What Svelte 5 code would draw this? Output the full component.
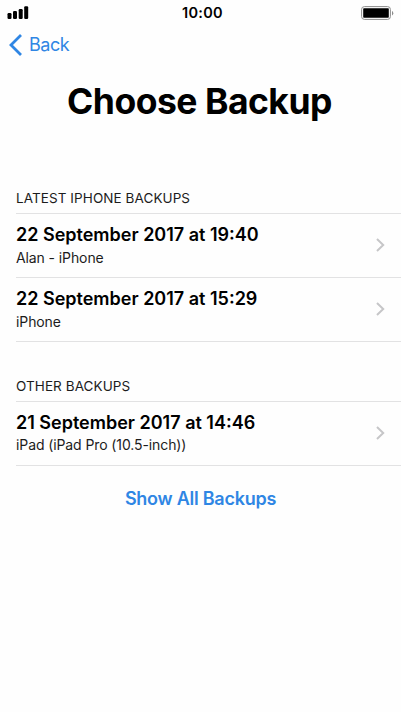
<script lang="ts">
    type Backup = { date: string; device: string };

    const groups: { id: string; title: string; backups: Backup[] }[] = [
        {
            id: 'latest',
            title: 'LATEST IPHONE BACKUPS',
            backups: [
                { date: '22 September 2017 at 19:40', device: 'Alan - iPhone' },
                { date: '22 September 2017 at 15:29', device: 'iPhone' },
            ],
        },
        {
            id: 'other',
            title: 'OTHER BACKUPS',
            backups: [{ date: '21 September 2017 at 14:46', device: 'iPad (iPad Pro (10.5-inch))' }],
        },
    ];
</script>

<style>
    :global(body) {
        background: #fefefe;
    }

    main {
        height: 712px;
        overflow: hidden;
        font-family: Inter, "Liberation Sans", sans-serif;
        color: #000;
    }

    button {
        padding: 0;
        border: none;
        background: none;
        font-family: inherit;
        color: inherit;
        text-align: left;
    }

    svg {
        display: block;
    }

    .status {
        display: grid;
        grid-template-columns: 1fr auto 1fr;
        align-items: center;
        height: 26px;
        padding: 0 7px;
    }

    .time {
        margin-left: 4px;
        padding-bottom: 2px;
        font-size: 14.5px;
        font-weight: 600;
        letter-spacing: 0.3px;
    }

    .battery {
        justify-self: end;
    }

    .back {
        display: flex;
        align-items: center;
        gap: 6px;
        height: 37px;
        padding-left: 9px;
        color: #2f86e4;
        font-size: 18px;
        letter-spacing: -0.5px;
    }

    h1 {
        margin: 17px 2px 0 0;
        text-align: center;
        font-size: 35.5px;
        line-height: 44px;
        font-weight: 700;
        letter-spacing: -0.5px;
    }

    .latest {
        margin-top: 64px;
        height: 188px;
    }

    h2 {
        height: 25px;
        margin: 0 0 0 16px;
        border-bottom: 1px solid #e2e2e3;
        font-size: 13.5px;
        line-height: 20px;
        font-weight: 400;
        letter-spacing: 0.08px;
        color: #1c1c1c;
    }

    .row {
        display: flex;
        align-items: center;
        justify-content: space-between;
        box-sizing: border-box;
        width: calc(100% - 16px);
        height: 64px;
        margin-left: 16px;
        padding: 0 16px 1px 0;
        border-bottom: 1px solid #e2e2e3;
    }

    .date,
    .device {
        display: block;
    }

    .date {
        font-size: 18px;
        line-height: 25px;
        font-weight: 600;
    }

    .device {
        font-size: 14px;
        line-height: 21px;
        letter-spacing: -0.1px;
        color: #1c1c1c;
    }

    .other .device {
        margin-top: -1px;
        padding-bottom: 1px;
    }

    .all {
        display: block;
        margin: 21px auto 0;
        color: #2f86e4;
        font-size: 18px;
        line-height: 24px;
        font-weight: 600;
        letter-spacing: -0.25px;
    }
</style>

<main>
    <div class="status">
        <svg width="22" height="14" viewBox="0 0 22 14">
            <rect x="0.5" y="7" width="4" height="6" rx="1.2" />
            <rect x="6" y="5" width="4" height="8" rx="1.2" />
            <rect x="11.7" y="3" width="4" height="10" rx="1.2" />
            <rect x="17.2" y="0.3" width="4" height="12.7" rx="1.2" />
        </svg>
        <span class="time">10:00</span>
        <svg class="battery" width="33" height="14" viewBox="0 0 33 14">
            <rect x="0.6" y="0.6" width="28.8" height="12.8" rx="2.8" fill="none" stroke="#8c8c8c" />
            <rect x="2.2" y="2.2" width="25.6" height="9.6" rx="0.8" />
            <path d="M31 5v4.4q1.3-.6 1.3-2.2T31 5z" fill="#8c8c8c" />
        </svg>
    </div>

    <button class="back">
        <svg width="14" height="22" viewBox="0 0 14 22">
            <path d="M12 1L2 11l10 10" fill="none" stroke="#2f86e4" stroke-width="2.8" />
        </svg>
        Back
    </button>

    <h1>Choose Backup</h1>

    {#each groups as group}
        <section class={group.id}>
            <h2>{group.title}</h2>
            {#each group.backups as backup}
                <button class="row">
                    <span>
                        <span class="date">{backup.date}</span>
                        <span class="device">{backup.device}</span>
                    </span>
                    <svg width="9" height="14" viewBox="0 0 9 14">
                        <path d="M1 1l6.2 6L1 13" fill="none" stroke="#c6c6c8" stroke-width="2" />
                    </svg>
                </button>
            {/each}
        </section>
    {/each}

    <button class="all">Show All Backups</button>
</main>
